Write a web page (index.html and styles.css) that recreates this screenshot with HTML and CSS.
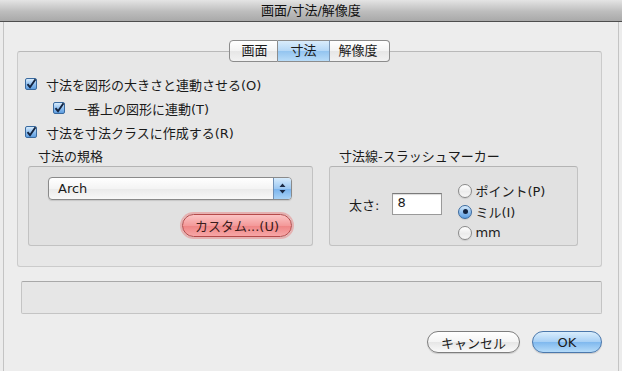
FILE: index.html
```html
<!DOCTYPE html>
<html lang="ja">
<head>
<meta charset="UTF-8">
<meta name="viewport" content="width=device-width, initial-scale=1.0">
<title>画面/寸法/解像度</title>
<link rel="stylesheet" href="styles.css">
</head>
<body>

<div class="titlebar">画面/寸法/解像度</div>

<div class="window">
  <div class="tabs">
    <span class="tab">画面</span>
    <span class="tab active">寸法</span>
    <span class="tab">解像度</span>
  </div>

  <div class="panel">
    <div class="check">
      <span class="box"><svg width="13" height="12" viewBox="0 0 13 12"><path d="M2.5 6.2 L5 9.2 L10.5 1.2" fill="none" stroke="#13233f" stroke-width="1.9"/></svg></span>
      寸法を図形の大きさと連動させる(O)
    </div>
    <div class="check indent">
      <span class="box"><svg width="13" height="12" viewBox="0 0 13 12"><path d="M2.5 6.2 L5 9.2 L10.5 1.2" fill="none" stroke="#13233f" stroke-width="1.9"/></svg></span>
      一番上の図形に連動(T)
    </div>
    <div class="check">
      <span class="box"><svg width="13" height="12" viewBox="0 0 13 12"><path d="M2.5 6.2 L5 9.2 L10.5 1.2" fill="none" stroke="#13233f" stroke-width="1.9"/></svg></span>
      寸法を寸法クラスに作成する(R)
    </div>

    <div class="groups">
      <div class="group">
        <div class="group-title">寸法の規格</div>
        <div class="group-box standard">
          <div class="select">
            <span class="select-value">Arch</span>
            <span class="select-arrow">
              <svg width="7" height="11" viewBox="0 0 7 11"><path d="M3.5 0.5 L6.5 4 L0.5 4 Z M0.5 7 L6.5 7 L3.5 10.5 Z" fill="#1b2a44"/></svg>
            </span>
          </div>
          <button class="custom">カスタム...(U)</button>
        </div>
      </div>

      <div class="group">
        <div class="group-title">寸法線-スラッシュマーカー</div>
        <div class="group-box marker">
          <div class="thickness">
            <span>太さ:</span>
            <span class="field">8</span>
          </div>
          <div class="radios">
            <div class="radio-row"><span class="radio"></span>ポイント(P)</div>
            <div class="radio-row"><span class="radio on"></span>ミル(I)</div>
            <div class="radio-row"><span class="radio"></span>mm</div>
          </div>
        </div>
      </div>
    </div>
  </div>

  <div class="status"></div>

  <div class="buttons">
    <button class="btn">キャンセル</button>
    <button class="btn default">OK</button>
  </div>
</div>

</body>
</html>
```

FILE: styles.css
```css
body {
  margin: 0;
  width: 622px;
  height: 371px;
  overflow: hidden;
  background-color: #ececec;
  font-family: "DejaVu Sans", "Noto Sans CJK JP", sans-serif;
  font-size: 13px;
  color: #1a1a1a;
}

.titlebar {
  height: 21px;
  line-height: 22px;
  text-align: center;
  background: linear-gradient(#e4e4e4, #bdbdbd 55%, #a9a9a9);
  border-bottom: 1px solid #4e4e4e;
  font-size: 13px;
  color: #111;
}

.window {
  height: 349px;
  margin: 0 3px;
  padding: 18px 16px 0 13px;
  box-sizing: border-box;
  border-left: 1px solid #c4c4c4;
  border-right: 1px solid #c4c4c4;
  background-color: #ededed;
}

/* segmented tabs */
.tabs {
  display: flex;
  justify-content: center;
  position: relative;
  z-index: 1;
  margin-bottom: -11px;
}

.tab {
  height: 20px;
  line-height: 20px;
  padding: 0 9px;
  border: 1px solid #8c8c8c;
  border-left: none;
  background: linear-gradient(#ffffff, #f3f3f3 50%, #e6e6e6 51%, #f2f2f2);
}

.tab:first-child {
  border-left: 1px solid #8c8c8c;
  border-radius: 4px 0 0 4px;
  padding: 0 10px 0 11px;
}

.tab:last-child {
  border-radius: 0 4px 4px 0;
  padding: 0 11px 0 9px;
}

.tab.active {
  padding: 0 12px;
  background: linear-gradient(#d9ecfb, #b4d7f6 50%, #93c4f0 51%, #b8dcf8);
  border-right-color: #7d98b6;
}

.panel {
  height: 216px;
  box-sizing: border-box;
  padding: 20px 7px 0 7px;
  border: 1px solid #cbcbcb;
  border-top-color: #b9b9b9;
  border-radius: 3px;
  background-color: #e7e7e7;
}

.check {
  display: flex;
  align-items: center;
  height: 24px;
  gap: 9px;
}

.check.indent {
  padding-left: 28px;
}

.box {
  width: 10px;
  height: 10px;
  border: 1px solid #3a6a9f;
  border-radius: 2px;
  background: linear-gradient(#d6ebfc, #8dbdee 55%, #5e9ee0);
  flex-shrink: 0;
}

.box svg {
  display: block;
  margin: -1px 0 0 -1px;
  overflow: visible;
}

.groups {
  display: flex;
  gap: 16px;
  margin: 6px 0 0 3px;
}

.group-title {
  height: 16px;
  line-height: 14px;
  padding-left: 10px;
}

.group-box {
  height: 80px;
  box-sizing: border-box;
  border: 1px solid #c2c2c2;
  border-top-color: #b4b4b4;
  border-radius: 3px;
  background-color: #e1e1e1;
}

.standard {
  width: 285px;
  padding: 10px 20px 0 19px;
  display: flex;
  flex-direction: column;
  align-items: flex-end;
}

.select {
  width: 244px;
  height: 23px;
  box-sizing: border-box;
  display: flex;
  border: 1px solid #8a8a8a;
  border-radius: 4px;
  background: linear-gradient(#ffffff, #f4f4f4 50%, #eaeaea 51%, #f8f8f8);
  box-shadow: 0 1px 1px rgba(0, 0, 0, 0.12);
}

.select-value {
  flex: 1;
  line-height: 21px;
  padding-left: 9px;
}

.select-arrow {
  width: 17px;
  display: flex;
  align-items: center;
  justify-content: center;
  border-left: 1px solid #6f8fb4;
  border-radius: 0 3px 3px 0;
  background: linear-gradient(#d6ebfc, #9cc8f2 50%, #78b2ec 51%, #a8d2f6);
}

.custom {
  margin-top: 14px;
  width: 110px;
  height: 23px;
  padding: 0;
  font-family: inherit;
  font-size: 13px;
  color: #3b1c1c;
  border: 1px solid #b44a4a;
  border-radius: 12px;
  background: linear-gradient(#fbc4c4, #f49a9a 50%, #ef8484 51%, #f6a6a6);
  box-shadow: 0 0 0 2px rgba(236, 120, 120, 0.45);
}

.marker {
  width: 249px;
  display: flex;
  padding: 13px 0 0 19px;
}

.thickness {
  display: flex;
  align-items: center;
  gap: 13px;
  height: 22px;
  margin-top: 13px;
}

.field {
  width: 50px;
  height: 22px;
  box-sizing: border-box;
  padding-left: 4px;
  line-height: 18px;
  background-color: #fff;
  border: 1px solid #9a9a9a;
  border-top-color: #7a7a7a;
  box-shadow: inset 0 1px 1px rgba(0, 0, 0, 0.15);
}

.radios {
  margin-left: 16px;
}

.radio-row {
  display: flex;
  align-items: center;
  gap: 3px;
  height: 21px;
}

.radio {
  width: 12px;
  height: 12px;
  border: 1px solid #8a8a8a;
  border-radius: 50%;
  background: linear-gradient(#ffffff, #ececec 55%, #f7f7f7);
  box-shadow: 0 1px 1px rgba(0, 0, 0, 0.1);
  position: relative;
}

.radio.on {
  border-color: #3a6a9f;
  background: linear-gradient(#d6ebfc, #8dbdee 55%, #5e9ee0);
}

.radio.on::after {
  content: "";
  position: absolute;
  left: 3.5px;
  top: 3.5px;
  width: 5px;
  height: 5px;
  border-radius: 50%;
  background-color: #13233f;
}

.status {
  height: 33px;
  box-sizing: border-box;
  margin: 14px 0 0 4px;
  border: 1px solid #c4c4c4;
  border-top-color: #a8a8a8;
  border-radius: 2px;
  background-color: #e6e6e6;
}

.buttons {
  display: flex;
  justify-content: flex-end;
  gap: 12px;
  margin-top: 17px;
}

.btn {
  width: 93px;
  height: 22px;
  padding: 0;
  font-family: inherit;
  font-size: 13px;
  color: #1a1a1a;
  border: 1px solid #7e7e7e;
  border-radius: 11px;
  background: linear-gradient(#ffffff, #f4f4f4 50%, #e6e6e6 51%, #fafafa);
  box-shadow: 0 1px 1px rgba(0, 0, 0, 0.15);
}

.btn.default {
  width: 70px;
  border-color: #4b78ac;
  background: linear-gradient(#d9edfc, #a6cff5 50%, #7fb8ee 51%, #b4dbf9);
}
```
